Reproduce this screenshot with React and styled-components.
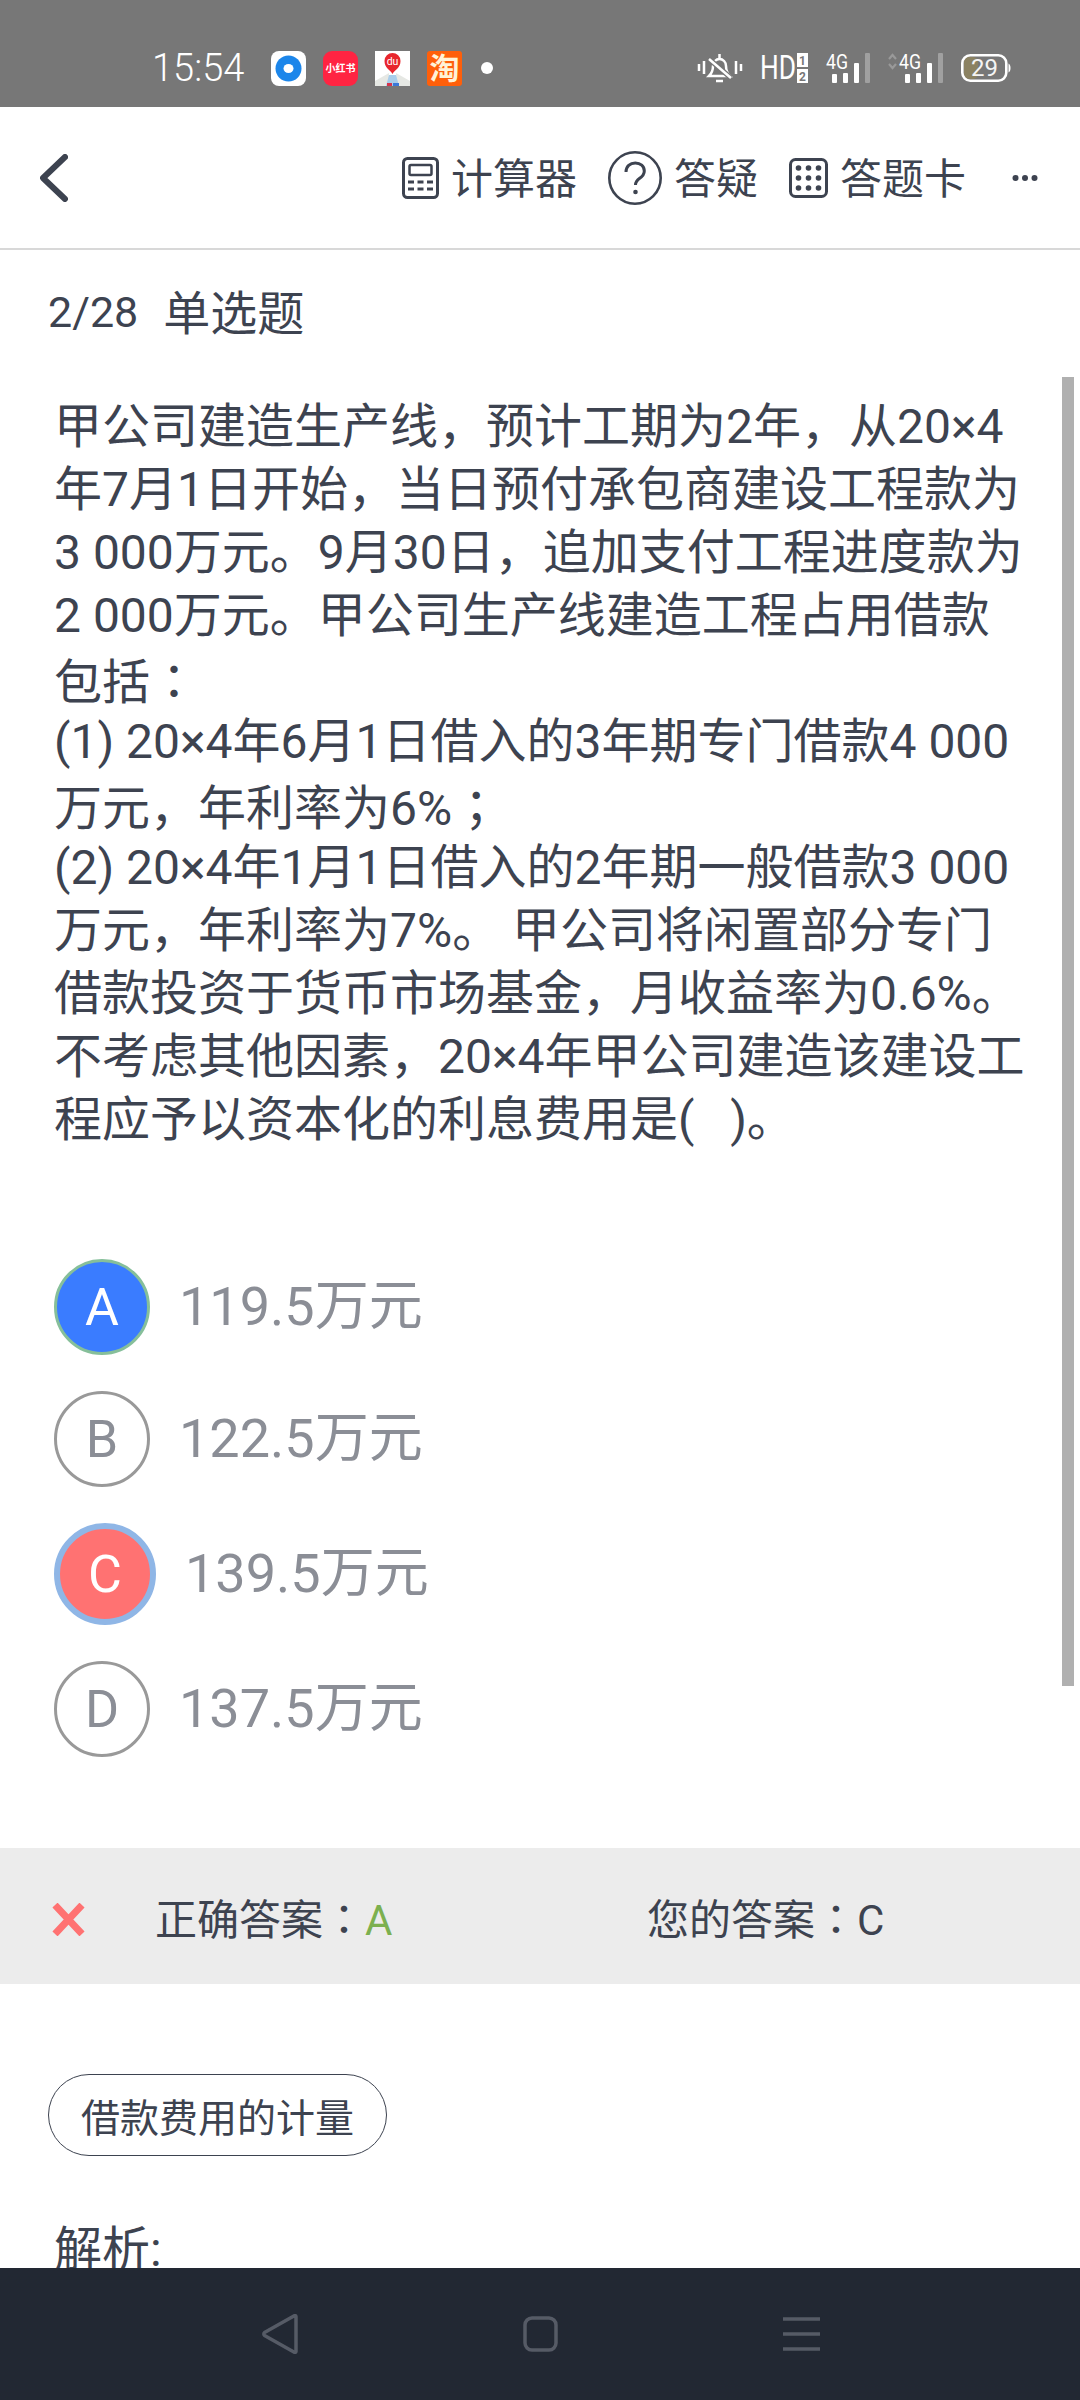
import React from "react";
import styled, { createGlobalStyle } from "styled-components";

const INK = "#3d4350";
const FONT = `Roboto, "Noto Sans CJK SC", sans-serif`;

const GlobalStyle = createGlobalStyle`
  html, body {
    margin: 0;
    padding: 0;
    background: #fff;
  }
`;

const Screen = styled.div`
  width: 1080px;
  height: 2400px;
  display: flex;
  flex-direction: column;
  overflow: hidden;
  background: #fff;
  color: ${INK};
  font-family: ${FONT};
`;

const StatusBar = styled.div`
  height: 107px;
  flex: none;
  display: flex;
  align-items: center;
  padding: 29px 69px 0 152px;
  box-sizing: border-box;
  background: #777;
`;

const Clock = styled.span`
  width: 92px;
  font-size: 38px;
  font-weight: 300;
  color: #fff;
`;

const AppIcons = styled.div`
  display: flex;
  align-items: center;
  gap: 17px;
  margin-left: 27px;
`;

const RedBookLogo = styled.div`
  width: 35px;
  height: 35px;
  border-radius: 9px;
  background: #ff2442;
  color: #fff;
  font-size: 10px;
  font-weight: 700;
  line-height: 35px;
  text-align: center;
  white-space: nowrap;
`;

const TaobaoLogo = styled.div`
  width: 35px;
  height: 35px;
  border-radius: 3px;
  background: #ff5f0a;
  color: #fff3d8;
  font-size: 30px;
  font-weight: 700;
  line-height: 35px;
  text-align: center;
`;

const StatusDot = styled.span`
  width: 12px;
  height: 12px;
  margin-left: 2px;
  border-radius: 50%;
  background: #fff;
`;

const SystemIcons = styled.div`
  display: flex;
  align-items: center;
  gap: 18px;
  margin-left: auto;

  svg {
    overflow: visible;
  }
`;

const TopNav = styled.div`
  height: 143px;
  flex: none;
  display: flex;
  align-items: center;
  padding: 0 42px 0 40px;
  box-sizing: border-box;
  border-bottom: 2px solid #d8d8d8;
`;

const NavActions = styled.div`
  display: flex;
  align-items: center;
  gap: 31px;
  margin-left: auto;
`;

const NavAction = styled.div`
  display: flex;
  align-items: center;
  gap: 12px;
  font-size: 42px;
  line-height: 54px;
`;

const NavLabel = styled.span`
  padding-top: 5px;
`;

const MoreButton = styled.div`
  display: flex;
  margin-left: 15px;
`;

const Content = styled.div`
  position: relative;
  flex: 1;
  min-height: 0;
  overflow: hidden;
`;

const ScrollThumb = styled.div`
  position: absolute;
  top: 127px;
  right: 6px;
  width: 12px;
  height: 1309px;
  background: #b0b0b0;
`;

const QuestionHeader = styled.div`
  display: flex;
  align-items: center;
  gap: 25px;
  height: 62px;
  margin-top: 31px;
  padding-left: 48px;
`;

const Progress = styled.span`
  font-size: 43px;
`;

const QuestionType = styled.span`
  padding-bottom: 5px;
  font-size: 47px;
`;

const Question = styled.div`
  margin-top: 52px;
  padding-left: 54px;
  font-size: 48px;
  line-height: 63px;
`;

const QuestionLine = styled.div`
  height: 63px;
  white-space: pre;
`;

// full-width punctuation sits centred in its cell here
const Mark = styled.span`
  font-family: "Noto Sans CJK TC", sans-serif;
`;

const OptionList = styled.div`
  display: flex;
  flex-direction: column;
  gap: 36px;
  margin-top: 108px;
  padding-left: 54px;
`;

const OptionRow = styled.div`
  display: flex;
  align-items: center;
  gap: 29px;
`;

const OptionBadge = styled.div`
  box-sizing: border-box;
  display: flex;
  align-items: center;
  justify-content: center;
  width: ${(p) => (p.$state === "wrong" ? 102 : 96)}px;
  height: ${(p) => (p.$state === "wrong" ? 102 : 96)}px;
  border-radius: 50%;
  font-size: 52px;
  border: ${(p) => (p.$state === "wrong" ? 6 : 3)}px solid
    ${(p) =>
      p.$state === "wrong" ? "#8fb6e6" : p.$state === "correct" ? "#86bf9a" : "#999"};
  background: ${(p) =>
    p.$state === "wrong" ? "#ff7272" : p.$state === "correct" ? "#3a7cff" : "#fff"};
  color: ${(p) => (p.$state ? "#fff" : "#8b8e96")};
`;

const OptionText = styled.span`
  padding-bottom: 12px;
  font-size: 54px;
  color: #8b8e96;
`;

const AnswerBar = styled.div`
  display: flex;
  align-items: center;
  height: 136px;
  margin-top: 91px;
  padding-left: 52px;
  background: #ececec;

  svg {
    flex: none;
    margin-top: 6px;
    margin-right: 70px;
  }
`;

const AnswerCell = styled.div`
  flex: none;
  width: 492px;
  font-size: 42px;
`;

const CorrectLetter = styled.span`
  color: #7cb04f;
`;

const Tag = styled.div`
  box-sizing: border-box;
  display: flex;
  align-items: center;
  justify-content: center;
  width: 339px;
  height: 82px;
  margin: 90px 0 0 48px;
  border: 1.5px solid ${INK};
  border-radius: 41px;
  font-size: 39px;
`;

const AnalysisTitle = styled.div`
  margin: 62px 0 0 54px;
  font-size: 48px;
  line-height: 63px;
`;

const SystemNav = styled.div`
  height: 132px;
  flex: none;
  display: flex;
  align-items: center;
  gap: 225px;
  padding-left: 262px;
  background: #222833;
`;

const questionLines = [
  "甲公司建造生产线，预计工期为2年，从20×4",
  "年7月1日开始，当日预付承包商建设工程款为",
  "3 000万元。9月30日，追加支付工程进度款为",
  "2 000万元。甲公司生产线建造工程占用借款",
  <>包括<Mark>：</Mark></>,
  "(1) 20×4年6月1日借入的3年期专门借款4 000",
  <>万元，年利率为6%<Mark>；</Mark></>,
  "(2) 20×4年1月1日借入的2年期一般借款3 000",
  "万元，年利率为7%。 甲公司将闲置部分专门",
  "借款投资于货币市场基金，月收益率为0.6%。",
  "不考虑其他因素，20×4年甲公司建造该建设工",
  "程应予以资本化的利息费用是(   )。",
];

const options = [
  { key: "A", text: "119.5万元", state: "correct" },
  { key: "B", text: "122.5万元" },
  { key: "C", text: "139.5万元", state: "wrong" },
  { key: "D", text: "137.5万元" },
];

const BackIcon = () => (
  <svg width="28" height="48" viewBox="0 0 28 48" fill="none" stroke={INK} strokeWidth="6" strokeLinecap="round" strokeLinejoin="round">
    <path d="M25 3 3 24l22 21" />
  </svg>
);

const CalculatorIcon = () => (
  <svg width="37" height="42" viewBox="0 0 37 42" fill="none" stroke={INK} strokeWidth="3">
    <rect x="1.5" y="1.5" width="34" height="39" rx="4" />
    <rect x="7.5" y="8" width="22" height="10" rx="1.5" strokeWidth="2.5" />
    <path d="M6 25h25M6 32h25" strokeDasharray="6 3.5" />
  </svg>
);

const QuestionIcon = () => (
  <svg width="54" height="54" viewBox="0 0 54 54" fill="none" stroke={INK} strokeWidth="2.6">
    <circle cx="27" cy="27" r="25.7" />
    <path d="M18 21c0-5.5 4-9 9.3-9 5.2 0 9 3.3 9 8 0 3.4-1.8 5.3-4.6 7.3-2.7 1.9-4.2 3.5-4.2 6.7" strokeWidth="3" />
    <circle cx="27.5" cy="41" r="2.3" fill={INK} stroke="none" />
  </svg>
);

const CardIcon = () => (
  <svg width="39" height="40" viewBox="0 0 39 40" fill="none">
    <rect x="1.5" y="1.5" width="36" height="37" rx="5" stroke={INK} strokeWidth="3" />
    {[10, 20, 30].map((cy) =>
      [9.5, 19.5, 29.5].map((cx) => (
        <circle key={`${cx}-${cy}`} cx={cx} cy={cy} r="2.8" fill={INK} />
      ))
    )}
  </svg>
);

const MoreIcon = () => (
  <svg width="26" height="8" viewBox="0 0 26 8" fill={INK}>
    <circle cx="3.5" cy="4" r="3" />
    <circle cx="13" cy="4" r="3" />
    <circle cx="22.5" cy="4" r="3" />
  </svg>
);

const MuteIcon = () => (
  <svg width="44" height="30" viewBox="0 0 44 30" fill="none" stroke="#fff" strokeWidth="2.5">
    <path d="M1 11v7M6 8v13M38 8v13M43 11v7" />
    <path d="M11 23c3-3 4-6 4-10 0-4 3-7 6.5-7s6.5 3 6.5 7c0 4 1 7 4 10z" />
    <path d="M21.5 1v4M18 28h7" />
    <path d="M11 6l22 19" stroke="#777" strokeWidth="5" />
    <path d="M11 6l22 19" />
  </svg>
);

const HdIcon = () => (
  <svg width="48" height="30" viewBox="0 0 48 30">
    <text x="0" y="26" fontFamily="Roboto, sans-serif" fontSize="33" fill="#fff" textLength="36" lengthAdjust="spacingAndGlyphs">HD</text>
    <rect x="37" y="0" width="11" height="14" fill="#fff" />
    <rect x="37" y="16" width="11" height="14" fill="#fff" />
    <text x="42.5" y="12" textAnchor="middle" fontFamily="Roboto, sans-serif" fontWeight="700" fontSize="12" fill="#777">1</text>
    <text x="42.5" y="28" textAnchor="middle" fontFamily="Roboto, sans-serif" fontWeight="700" fontSize="12" fill="#777">2</text>
  </svg>
);

const SignalIcon = ({ arrows }) => (
  <svg width={arrows ? 55 : 44} height="32" viewBox={`${arrows ? -11 : 0} 0 ${arrows ? 55 : 44} 32`} fill="#fff">
    {arrows && (
      <path d="M-10 7l3.5-4 3.5 4M-10 12l3.5 4 3.5-4" fill="none" stroke="#999" strokeWidth="2.2" />
    )}
    <text x="0" y="17" fontFamily="Roboto, sans-serif" fontSize="20" textLength="22" lengthAdjust="spacingAndGlyphs">4G</text>
    <rect x="6" y="22" width="5" height="9" rx="1" />
    <rect x="17" y="21" width="5" height="10" rx="1" />
    <rect x="28" y="11" width="5" height="20" rx="1" />
    <rect x="39" y="1" width="5" height="30" rx="1" opacity="0.3" />
  </svg>
);

const BatteryIcon = () => (
  <svg width="50" height="28" viewBox="0 0 50 28" fill="none">
    <rect x="3" y="3" width="14" height="22" rx="5" fill="#8b8262" />
    <rect x="1.3" y="1.3" width="44" height="25.4" rx="8" stroke="#fff" strokeWidth="2.6" />
    <path d="M47.5 9.5c1.5 1 2 2.5 2 4.5s-.5 3.5-2 4.5z" fill="#fff" />
    <text x="23.5" y="22" textAnchor="middle" fontFamily="Roboto, sans-serif" fontSize="24" fill="#f4f4f4">29</text>
  </svg>
);

const RingLogo = () => (
  <svg width="35" height="35" viewBox="0 0 35 35">
    <rect width="35" height="35" rx="8" fill="#fff" />
    <circle cx="17.5" cy="17.5" r="13" fill="#1c86ea" />
    <ellipse cx="17.5" cy="17.5" rx="5" ry="4.5" fill="#fff" />
  </svg>
);

const MapLogo = () => (
  <svg width="35" height="35" viewBox="0 0 35 35">
    <rect width="35" height="35" fill="#fff" />
    <path d="M0 30l14-8v13H0zM35 30l-14-8v13h14z" fill="#e6e8e4" />
    <path d="M14 24h7l3 11H11z" fill="#a9cdea" />
    <rect x="12" y="32" width="5" height="3" fill="#d8344a" />
    <rect x="18" y="32" width="6" height="3" fill="#3b78d8" />
    <path d="M17.5 23c-2-4-8-6-8-13a8 8 0 0 1 16 0c0 7-6 9-8 13z" fill="#e8262d" />
    <text x="17.5" y="13.5" textAnchor="middle" fontFamily="Roboto, sans-serif" fontSize="10.5" fill="#fff">du</text>
  </svg>
);

const CrossIcon = () => (
  <svg width="33" height="33" viewBox="0 0 33 33" stroke="#ff7272" strokeWidth="7">
    <path d="M3 2l27 29M30 2 3 31" />
  </svg>
);

const NavBackIcon = () => (
  <svg width="36" height="40" viewBox="0 0 36 40" fill="none" stroke="#565b66" strokeWidth="3.5" strokeLinejoin="round">
    <path d="M34 2.5v35a1 1 0 0 1-1.7.7L2.5 21.5a2 2 0 0 1 0-3L32.3 1.8a1 1 0 0 1 1.7.7z" />
  </svg>
);

const NavHomeIcon = () => (
  <svg width="35" height="36" viewBox="0 0 35 36" fill="none" stroke="#565b66" strokeWidth="3.5">
    <rect x="2" y="2" width="31" height="32" rx="7" />
  </svg>
);

const NavMenuIcon = () => (
  <svg width="37" height="34" viewBox="0 0 37 34" stroke="#565b66" strokeWidth="3.5">
    <path d="M0 2h37M0 17h37M0 32h37" />
  </svg>
);

const App = () => (
  <Screen>
    <GlobalStyle />
    <StatusBar>
      <Clock>15:54</Clock>
      <AppIcons>
        <RingLogo />
        <RedBookLogo>小红书</RedBookLogo>
        <MapLogo />
        <TaobaoLogo>淘</TaobaoLogo>
        <StatusDot />
      </AppIcons>
      <SystemIcons>
        <MuteIcon />
        <HdIcon />
        <SignalIcon />
        <SignalIcon arrows />
        <BatteryIcon />
      </SystemIcons>
    </StatusBar>

    <TopNav>
      <BackIcon />
      <NavActions>
        <NavAction><CalculatorIcon /><NavLabel>计算器</NavLabel></NavAction>
        <NavAction><QuestionIcon /><NavLabel>答疑</NavLabel></NavAction>
        <NavAction><CardIcon /><NavLabel>答题卡</NavLabel></NavAction>
        <MoreButton><MoreIcon /></MoreButton>
      </NavActions>
    </TopNav>

    <Content>
      <ScrollThumb />
      <QuestionHeader>
        <Progress>2/28</Progress>
        <QuestionType>单选题</QuestionType>
      </QuestionHeader>

      <Question>
        {questionLines.map((line, i) => (
          <QuestionLine key={i}>{line}</QuestionLine>
        ))}
      </Question>

      <OptionList>
        {options.map((opt) => (
          <OptionRow key={opt.key}>
            <OptionBadge $state={opt.state}>{opt.key}</OptionBadge>
            <OptionText>{opt.text}</OptionText>
          </OptionRow>
        ))}
      </OptionList>

      <AnswerBar>
        <CrossIcon />
        <AnswerCell>正确答案<Mark>：</Mark><CorrectLetter>A</CorrectLetter></AnswerCell>
        <AnswerCell>您的答案<Mark>：</Mark>C</AnswerCell>
      </AnswerBar>

      <Tag>借款费用的计量</Tag>
      <AnalysisTitle>解析:</AnalysisTitle>
    </Content>

    <SystemNav>
      <NavBackIcon />
      <NavHomeIcon />
      <NavMenuIcon />
    </SystemNav>
  </Screen>
);

export default App;
